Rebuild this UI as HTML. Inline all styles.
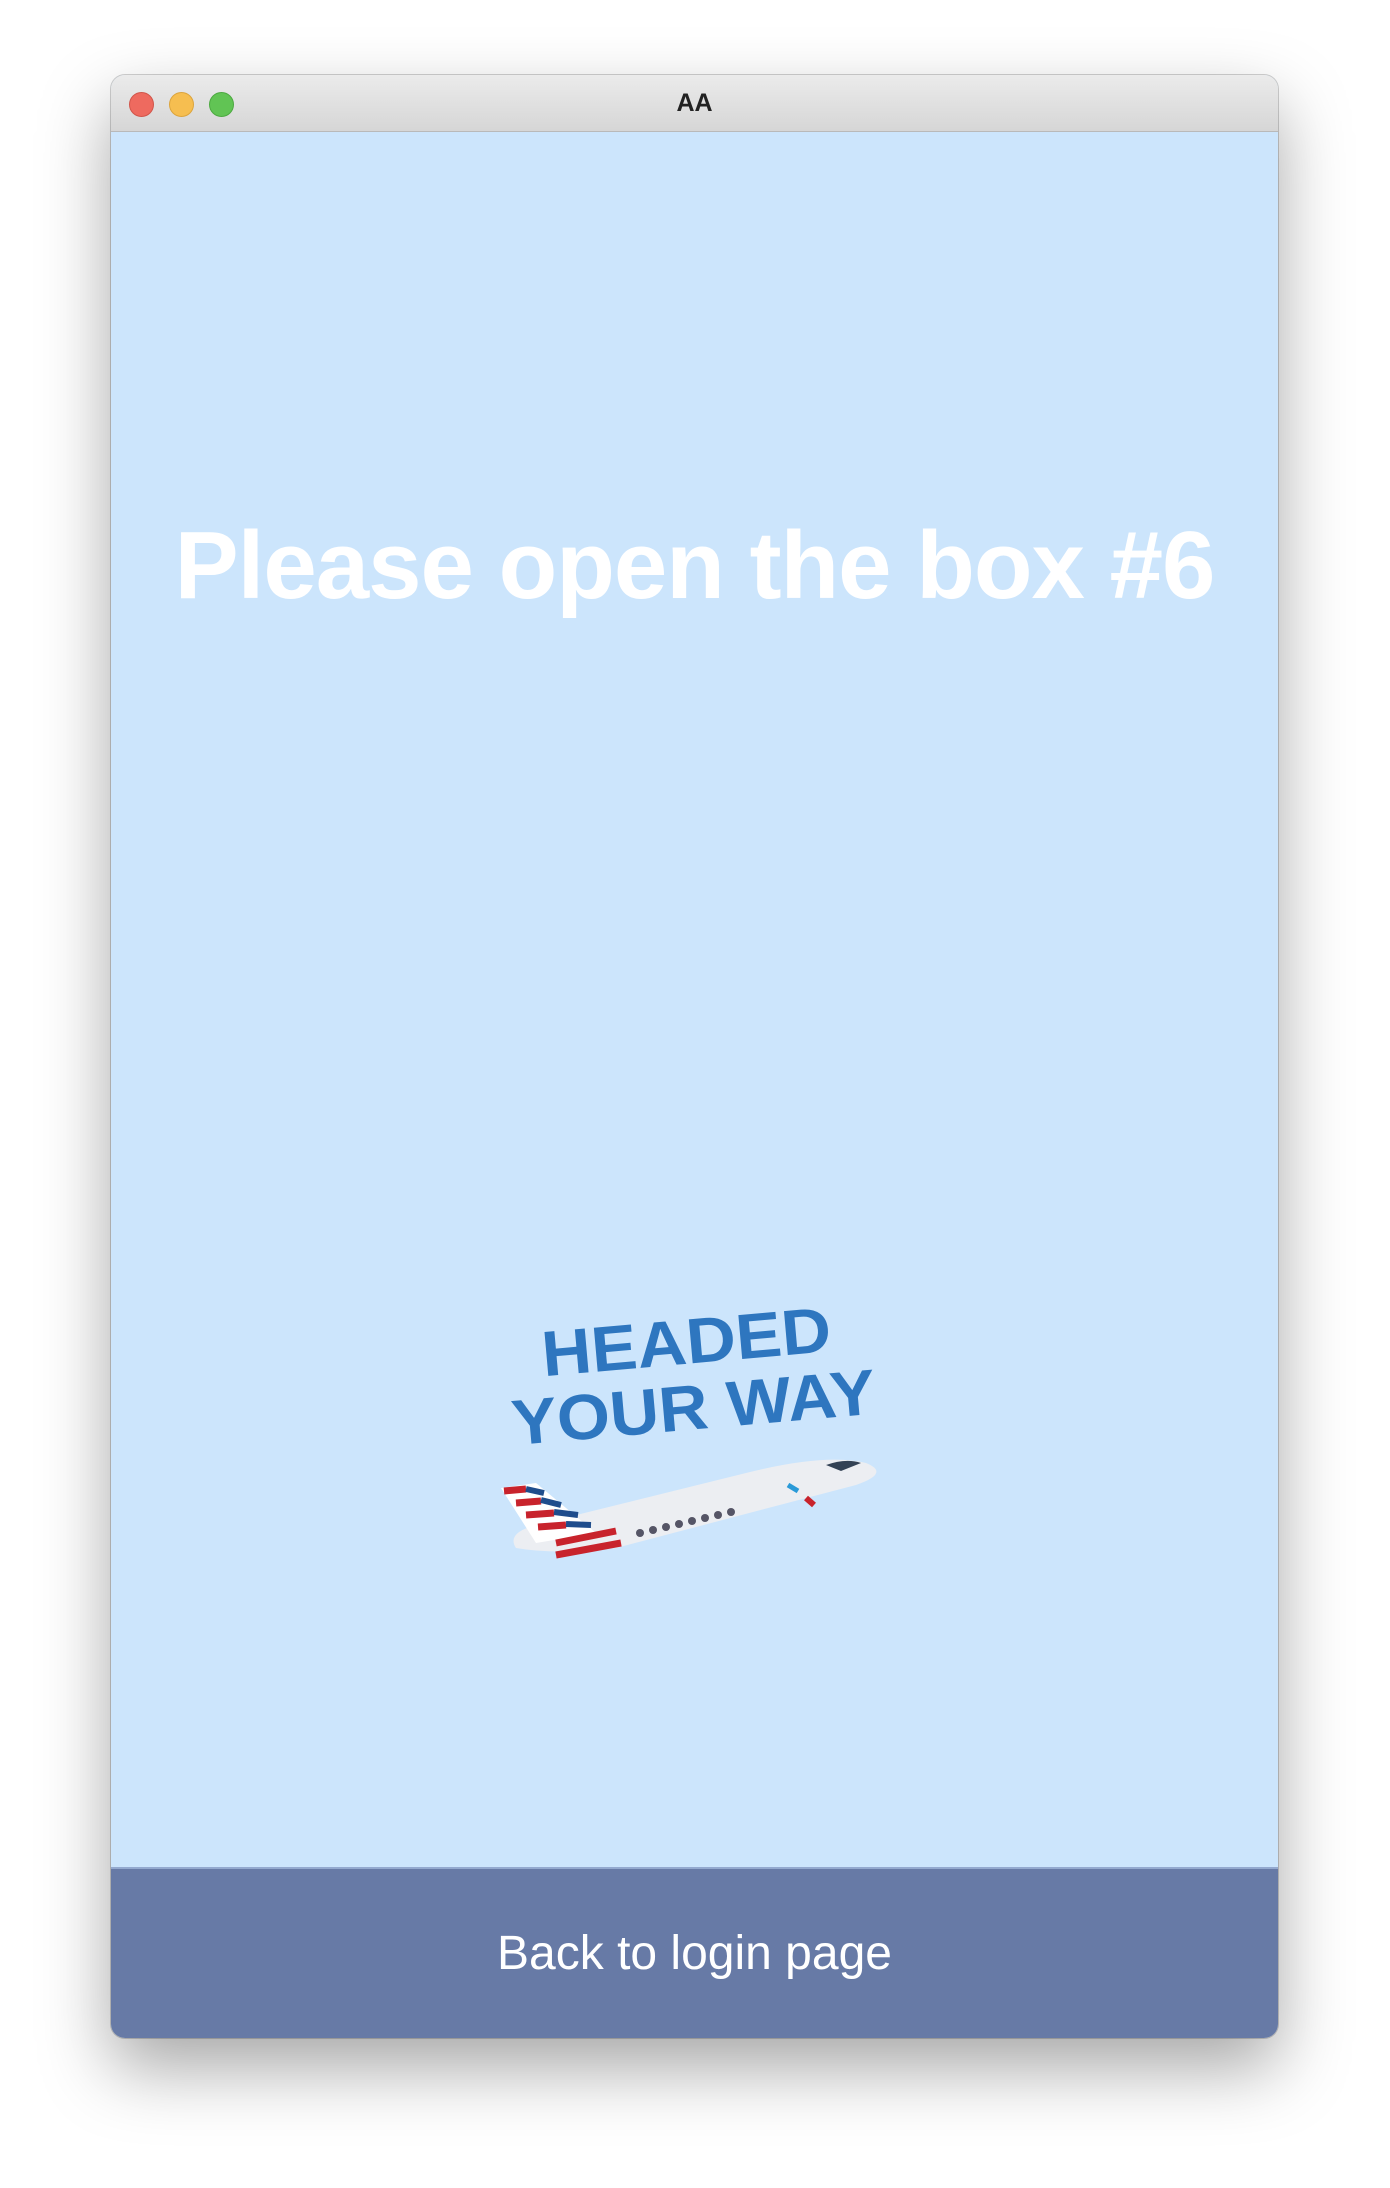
<!DOCTYPE html>
<html><head><meta charset="utf-8"><style>
html,body{margin:0;padding:0;width:1390px;height:2188px;background:#fff;overflow:hidden;font-family:"Liberation Sans",sans-serif}
.win{position:absolute;left:111px;top:75px;width:1167px;height:1963px;border-radius:14px;overflow:hidden;box-shadow:0 30px 70px rgba(0,0,0,.35),0 0 0 1px rgba(0,0,0,.18);background:#cce5fc}
.tb{position:absolute;left:0;top:0;width:100%;height:56px;background:linear-gradient(#ebebeb,#d6d6d6);border-bottom:1px solid #b9b9b9}
.dot{position:absolute;top:17px;width:23px;height:23px;border-radius:50%}
.tt{position:absolute;left:0;right:0;top:14px;text-align:center;font-weight:bold;font-size:25px;color:#222}
h1{position:absolute;left:0;right:0;top:436px;margin:0;text-align:center;color:#fff;font-size:96px;font-weight:bold;letter-spacing:-1px}
.bar{position:absolute;left:0;top:1792px;width:100%;height:171px;background:#677aa6;border-top:2px solid #93a9cf;color:#fff;text-align:center;font-size:48px;line-height:170px}
</style></head><body>
<div class="win">
<div class="tb">
<div class="dot" style="left:18px;background:#ee6a5f;border:1px solid #d1554a"></div>
<div class="dot" style="left:58px;background:#f6be50;border:1px solid #dca43c"></div>
<div class="dot" style="left:98px;background:#61c454;border:1px solid #4ca940"></div>
<div class="tt">AA</div>
</div>
<h1>Please open the box #6</h1>
<svg style="position:absolute;left:385px;top:1218px" width="400" height="270" viewBox="0 0 400 270">
<g transform="rotate(-5 200 80)" fill="#2e76bf" font-family="Liberation Sans,sans-serif" font-weight="bold">
<text x="48" y="70" font-size="64" textLength="290" lengthAdjust="spacingAndGlyphs">HEADED</text>
<text x="12" y="136" font-size="64" textLength="365" lengthAdjust="spacingAndGlyphs">YOUR WAY</text>
</g>
<path d="M20 255 Q10 240 40 232 L250 180 Q330 160 370 170 Q395 180 360 192 L120 255 Q60 262 20 255Z" fill="#eceef2"/>
<path d="M5 195 L40 190 L100 240 L40 250Z" fill="#fff"/>
<g stroke="#c8232c" stroke-width="7"><line x1="8" y1="198" x2="30" y2="196"/><line x1="20" y1="210" x2="45" y2="208"/><line x1="30" y1="222" x2="58" y2="220"/><line x1="42" y1="234" x2="70" y2="232"/><line x1="60" y1="250" x2="120" y2="238"/><line x1="60" y1="262" x2="125" y2="250"/></g>
<g stroke="#1f4d8c" stroke-width="6"><line x1="30" y1="196" x2="48" y2="200"/><line x1="45" y1="207" x2="65" y2="212"/><line x1="58" y1="219" x2="82" y2="222"/><line x1="70" y1="231" x2="95" y2="232"/></g>
<path d="M330 172 Q350 165 365 170 L345 178Z" fill="#334255"/>
<g fill="#556"><circle cx="144" cy="240" r="4"/><circle cx="157" cy="237" r="4"/><circle cx="170" cy="234" r="4"/><circle cx="183" cy="231" r="4"/><circle cx="196" cy="228" r="4"/><circle cx="209" cy="225" r="4"/><circle cx="222" cy="222" r="4"/><circle cx="235" cy="219" r="4"/></g>
<path d="M292 192 L302 198" stroke="#2a9ad8" stroke-width="5"/><path d="M310 205 L318 212" stroke="#c8232c" stroke-width="6"/>
</svg>
<div class="bar">Back to login page</div>
</div>
</body></html>
